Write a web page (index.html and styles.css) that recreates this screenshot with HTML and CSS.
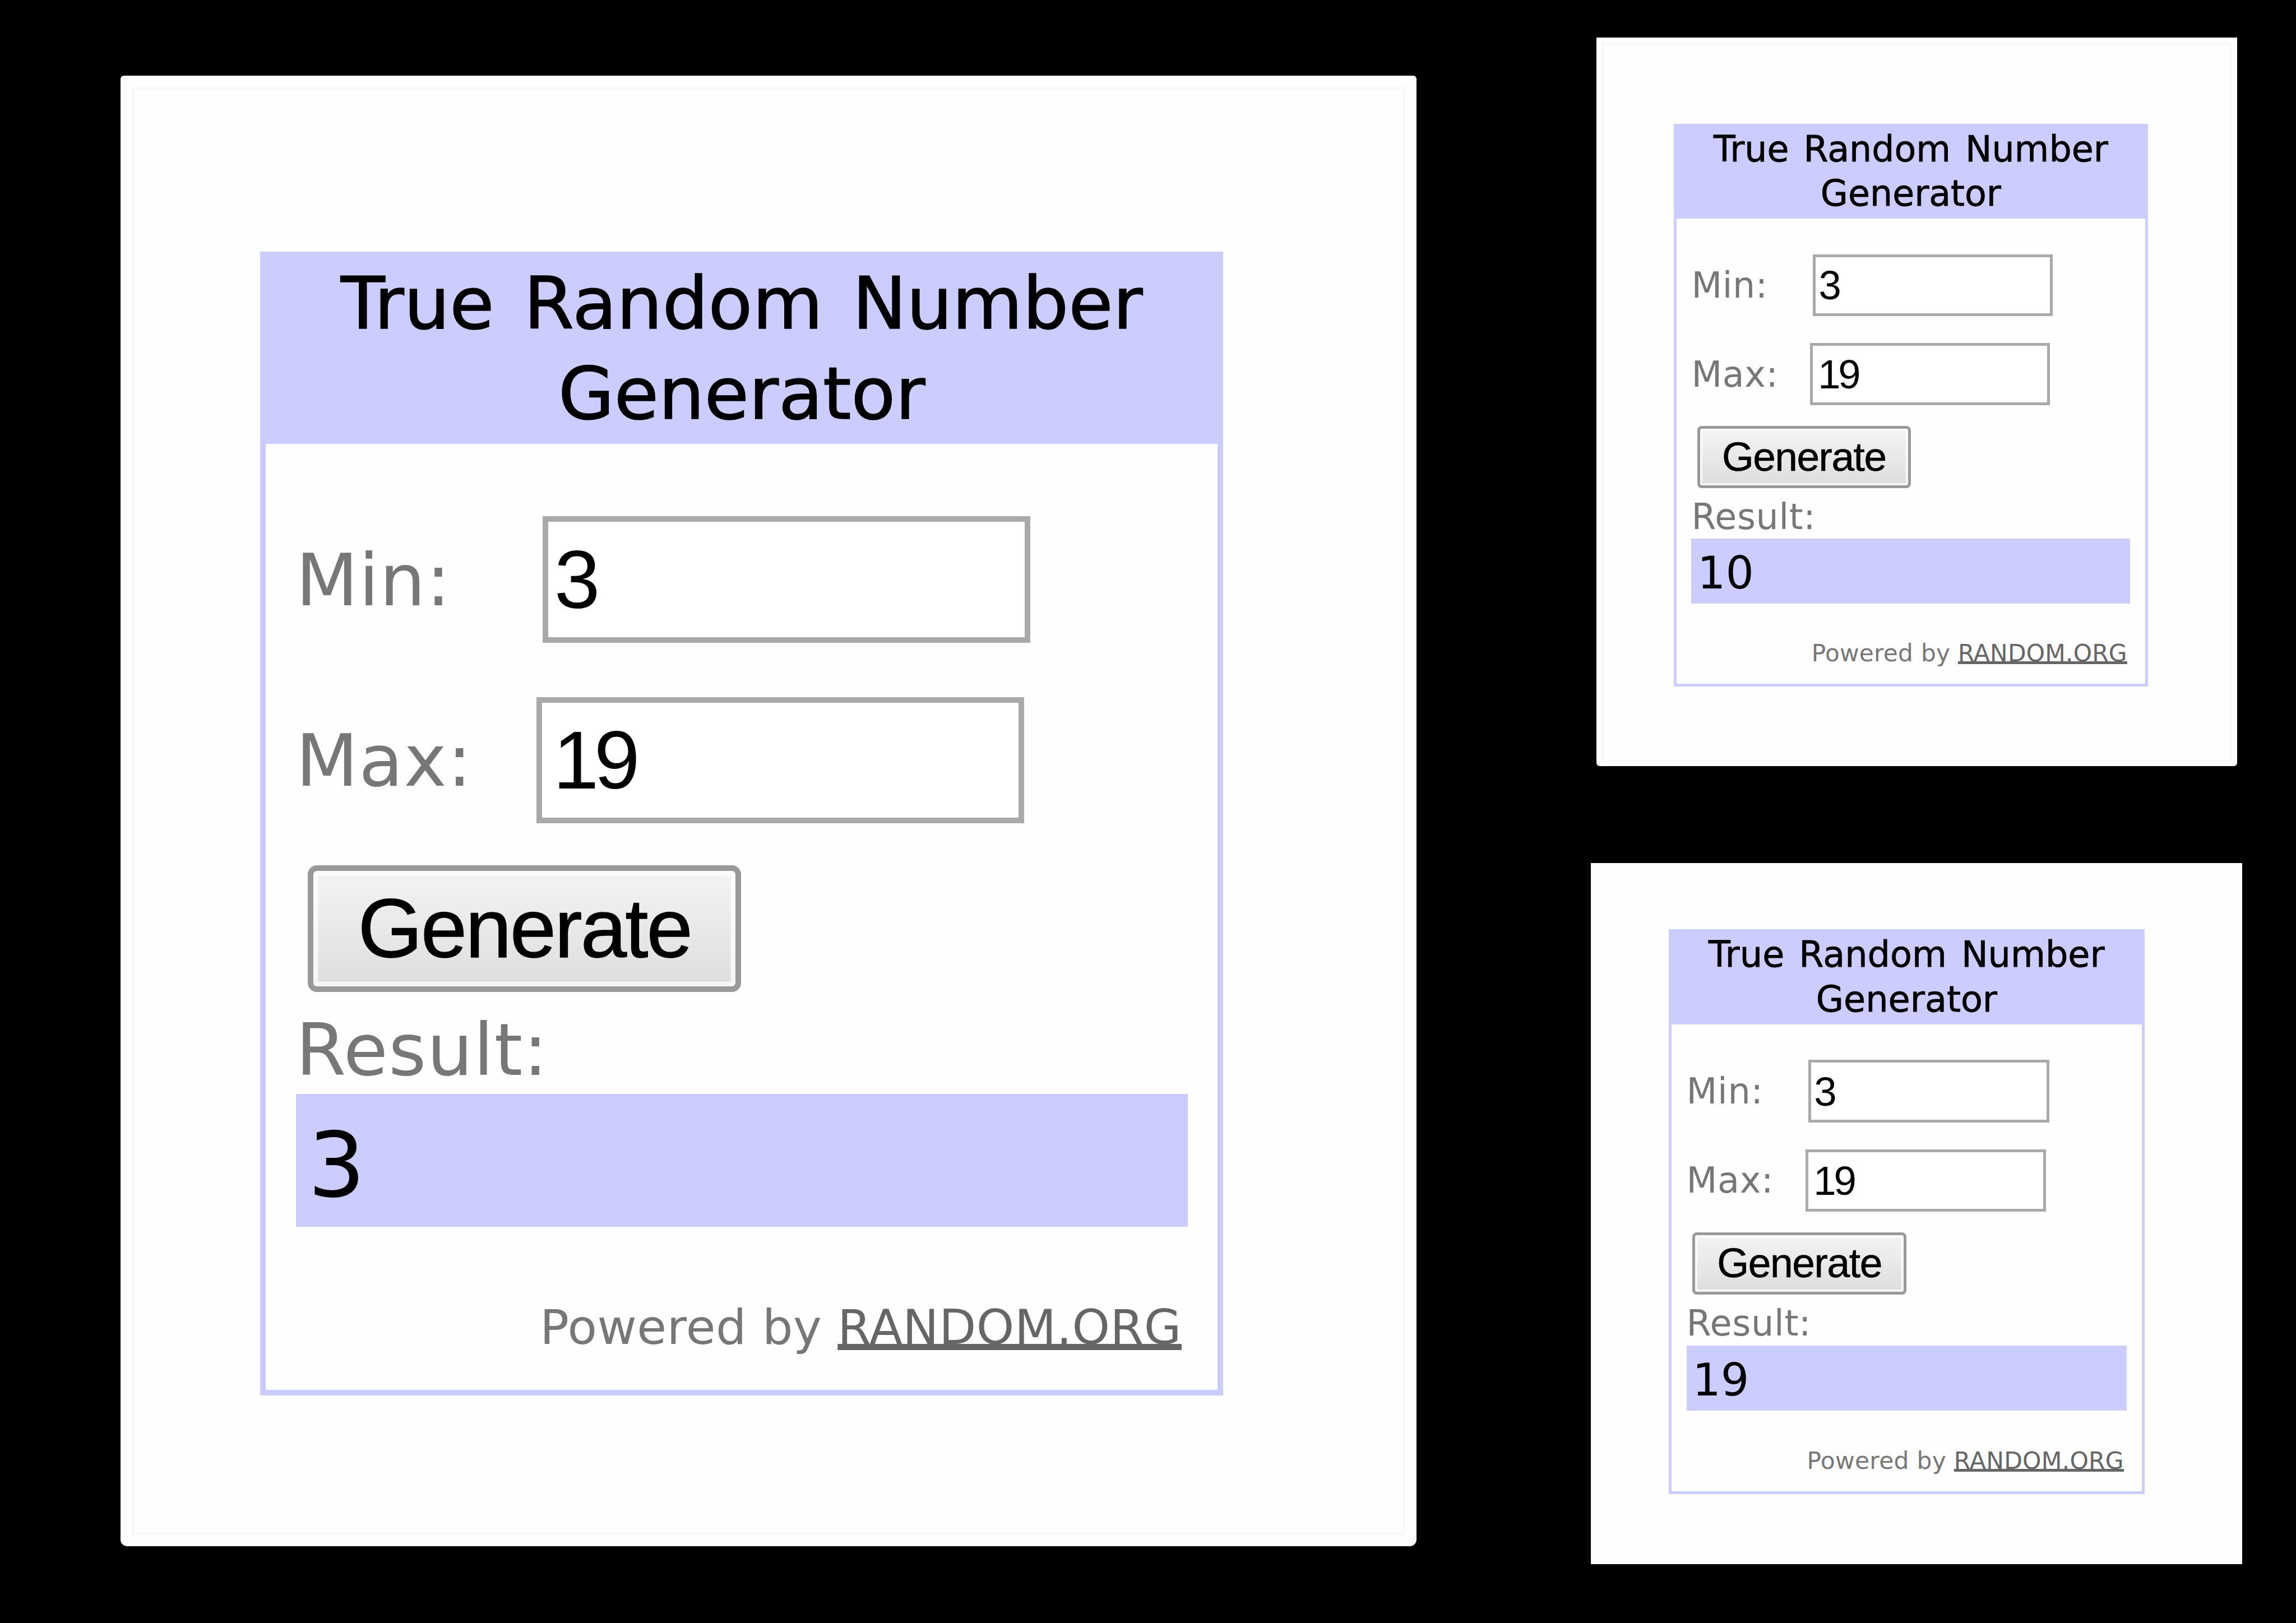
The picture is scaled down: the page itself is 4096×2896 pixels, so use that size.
FILE: index.html
```html
<!DOCTYPE html>
<html lang="en">
<head>
    <meta charset="UTF-8">
    <meta name="viewport" content="width=device-width, initial-scale=1.0">
    <title>True Random Number Generator</title>
    <link rel="stylesheet" href="styles.css">
</head>
<body>
    <div class="page">
        <div class="panel panel-large">
            <div class="widget">
                <div class="title">True Random Number<br>Generator</div>
                <div class="fields">
                    <label class="row"><span class="label label-min">Min:</span><input class="number" type="text" value="3"></label>
                    <label class="row"><span class="label label-max">Max:</span><input class="number number-max" type="text" value="19"></label>
                </div>
                <button class="generate">Generate</button>
                <div class="result-label">Result:</div>
                <div class="result">3</div>
                <div class="powered">Powered by <a class="link" href="#">RANDOM.ORG</a></div>
            </div>
        </div>
        <div class="side">
            <div class="panel panel-top">
                <div class="widget">
                    <div class="title">True Random Number<br>Generator</div>
                    <div class="fields">
                        <label class="row"><span class="label label-min">Min:</span><input class="number" type="text" value="3"></label>
                        <label class="row"><span class="label label-max">Max:</span><input class="number number-max" type="text" value="19"></label>
                    </div>
                    <button class="generate">Generate</button>
                    <div class="result-label">Result:</div>
                    <div class="result">10</div>
                    <div class="powered">Powered by <a class="link" href="#">RANDOM.ORG</a></div>
                </div>
            </div>
            <div class="panel panel-bottom">
                <div class="widget">
                    <div class="title">True Random Number<br>Generator</div>
                    <div class="fields">
                        <label class="row"><span class="label label-min">Min:</span><input class="number" type="text" value="3"></label>
                        <label class="row"><span class="label label-max">Max:</span><input class="number number-max" type="text" value="19"></label>
                    </div>
                    <button class="generate">Generate</button>
                    <div class="result-label">Result:</div>
                    <div class="result">19</div>
                    <div class="powered">Powered by <a class="link" href="#">RANDOM.ORG</a></div>
                </div>
            </div>
        </div>
    </div>
</body>
</html>
```
FILE: styles.css
```css
*, *::before, *::after {
	box-sizing: border-box;
}

body {
	margin: 0;
	background-color: black;
}

.page {
	display: flex;
	align-items: flex-start;
	width: 4096px;
	height: 2896px;
	overflow: hidden;
}

.panel {
	background-color: #fefefe;
}

.panel-large {
	--u: 10.74px;
	width: 2312px;
	height: 2624px;
	margin: 135px 0 0 215px;
	padding: 314px 0 0 249px;
	border-radius: 6px 6px 12px 12px;
	outline: 5px solid #f8f8f8;
	outline-offset: -25px;
}

.side {
	display: flex;
	flex-direction: column;
	margin-left: 311px;
}

.panel-top {
	--u: 5.285px;
	width: 1143px;
	height: 1300px;
	margin: 67px 0 0 10px;
	padding: 154px 0 0 138px;
	border-radius: 0 0 6px 6px;
	outline: 3px solid #f8f8f8;
	outline-offset: -12px;
}

.panel-bottom {
	--u: 5.305px;
	width: 1162px;
	height: 1251px;
	margin-top: 173px;
	padding: 118px 0 0 139px;
}

/* every size in the widget is a multiple of --u */
.widget {
	display: flex;
	flex-direction: column;
	align-items: flex-start;
	width: calc(160 * var(--u));
	height: calc(190 * var(--u));
	padding: 0 calc(5 * var(--u));
	border: var(--u) solid #ccccff;
	font-family: "DejaVu Sans", Verdana, sans-serif;
	font-size: calc(12 * var(--u));
	line-height: calc(15 * var(--u));
	letter-spacing: calc(0.12 * var(--u));
	color: #777777;
}

.title {
	align-self: stretch;
	height: calc(31.05 * var(--u));
	margin: 0 calc(-5 * var(--u));
	padding-top: calc(0.2 * var(--u));
	background-color: #ccccff;
	color: black;
	text-align: center;
	letter-spacing: 0;
	word-spacing: calc(1.1 * var(--u));
	-webkit-text-stroke: calc(0.15 * var(--u)) black;
}

.fields {
	display: flex;
	flex-direction: column;
	gap: calc(9 * var(--u));
	margin-top: calc(12 * var(--u));
}

.row {
	display: flex;
	align-items: center;
	height: calc(21 * var(--u));
}

.label {
	padding-top: calc(0.3 * var(--u));
}

.label-min {
	width: calc(41 * var(--u));
}

.label-max {
	width: calc(40 * var(--u));
}

.number {
	width: calc(81 * var(--u));
	height: calc(21 * var(--u));
	margin: 0;
	padding: 0 var(--u);
	border: var(--u) solid #a9a9a9;
	border-radius: 0;
	background-color: white;
	font-family: "Liberation Sans", Arial, sans-serif;
	font-size: calc(13.7 * var(--u));
	letter-spacing: calc(-0.8 * var(--u));
	color: black;
}

.number-max {
	padding-left: calc(1.8 * var(--u));
}

.generate {
	width: calc(72 * var(--u));
	height: calc(21 * var(--u));
	margin: calc(7 * var(--u)) 0 0 calc(2 * var(--u));
	padding: 0;
	border: var(--u) solid #999999;
	border-radius: calc(1.5 * var(--u));
	background: linear-gradient(#f4f4f4, #dddddd);
	box-shadow: inset 0 0 0 calc(0.8 * var(--u)) rgba(255, 255, 255, 0.7);
	font-family: "Liberation Sans", Arial, sans-serif;
	font-size: calc(13.8 * var(--u));
	letter-spacing: calc(-0.27 * var(--u));
	line-height: calc(19 * var(--u));
	color: black;
	-webkit-text-stroke: calc(0.12 * var(--u)) black;
}

.result-label {
	height: calc(15 * var(--u));
	margin-top: calc(2 * var(--u));
	padding-top: calc(0.2 * var(--u));
}

.result {
	width: 100%;
	height: calc(22 * var(--u));
	padding: calc(0.8 * var(--u)) 0 0 calc(2 * var(--u));
	background-color: #ccccff;
	font-size: calc(15 * var(--u));
	line-height: calc(22 * var(--u));
	letter-spacing: 0;
	color: black;
}

.powered {
	align-self: flex-end;
	margin: calc(9.3 * var(--u)) var(--u) 0 0;
	font-size: calc(8 * var(--u));
	letter-spacing: calc(0.05 * var(--u));
}

.link {
	color: #666666;
	text-decoration-thickness: var(--u);
	text-underline-offset: 0;
	text-decoration-skip-ink: none;
}
```
